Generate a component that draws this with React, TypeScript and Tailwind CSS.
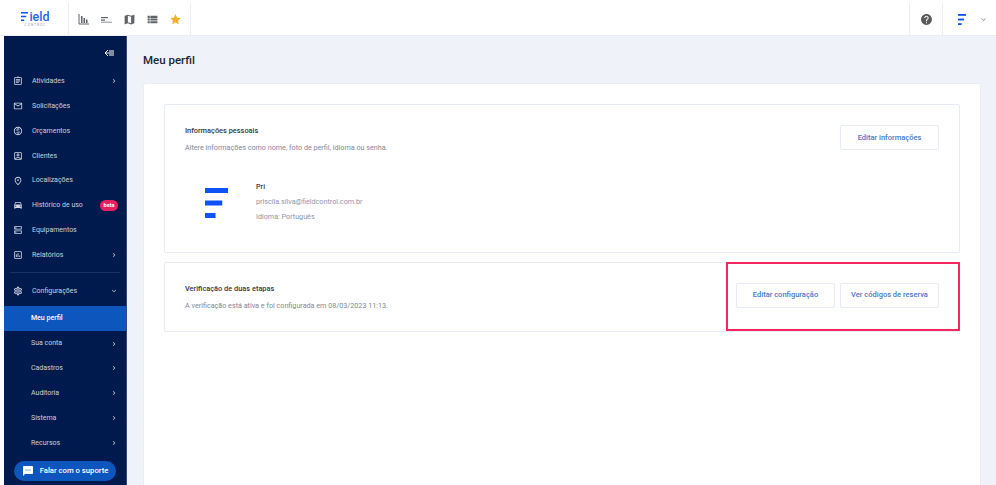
import React from 'react';
import {
  MdOutlineAssignment, MdOutlineMarkunread, MdOutlineMonetizationOn, MdOutlineAccountBox, MdOutlinePlace, MdDirectionsCar, MdOutlineDns, MdOutlineAssessment,
  MdOutlineSettings, MdChevronRight, MdExpandMore, MdSms, MdMap, MdViewList, MdStar, MdHelp,
} from 'react-icons/md';

const mainItems = [
  { label: 'Atividades', icon: MdOutlineAssignment, arrow: true },
  { label: 'Solicitações', icon: MdOutlineMarkunread },
  { label: 'Orçamentos', icon: MdOutlineMonetizationOn },
  { label: 'Clientes', icon: MdOutlineAccountBox },
  { label: 'Localizações', icon: MdOutlinePlace },
  { label: 'Histórico de uso', icon: MdDirectionsCar, beta: true },
  { label: 'Equipamentos', icon: MdOutlineDns },
  { label: 'Relatórios', icon: MdOutlineAssessment, arrow: true },
];

const subItems = ['Sua conta', 'Cadastros', 'Auditoria', 'Sistema', 'Recursos'];

const LogoBars = ({ className }: { className: string }) => (
  <svg viewBox="0 0 24 30" preserveAspectRatio="none" className={className}>
    <rect x="0" y="0" width="24" height="5" fill="#0f52f5" />
    <rect x="0" y="12.5" width="18" height="5" fill="#0f52f5" />
    <rect x="0" y="25" width="11" height="5" fill="#0f52f5" />
  </svg>
);

const SecondaryButton = ({ label }: { label: string }) => (
  <button className="w-[99px] h-[25px] shrink-0 bg-white border border-[#e6ebf5] rounded-[2px] text-[7.5px] font-medium text-[#4a78c8]">
    {label}
  </button>
);

export default function App() {
  return (
    <div className="relative w-[996px] h-[485px] overflow-hidden bg-white font-['Roboto',sans-serif]">
      {/* topbar */}
      <header className="h-[36px] pt-[3px] flex items-stretch bg-white border-b border-[#e9edf4]">
        <div className="w-[68px] shrink-0 flex flex-col items-center justify-center pl-[3px]">
          <div className="flex items-center text-[12.5px] leading-[12px] font-medium text-[#2b62e8]">
            <LogoBars className="w-[7px] h-[9px] mr-[1px]" />
            ield
          </div>
          <div className="text-[3px] leading-[5px] tracking-[1.2px] text-[#8a93a3]">CONTROL</div>
        </div>
        <div className="w-[123px] shrink-0 flex items-center gap-[10px] pl-[9px] border-l border-r border-[#e9edf4] text-[#5f6368]">
          <svg viewBox="0 0 12 12" className="w-[12px] h-[12px]">
            <path d="M1 1v10h10" fill="none" stroke="#5f6368" strokeWidth="1" />
            <rect x="3" y="3" width="1.5" height="7" fill="#5f6368" />
            <rect x="5.5" y="5" width="1.5" height="5" fill="#5f6368" />
            <rect x="8" y="6.5" width="1.5" height="3.5" fill="#5f6368" />
          </svg>
          <svg viewBox="0 0 13 13" className="w-[13px] h-[13px]">
            <rect x="1" y="4" width="7" height="1.2" fill="#5f6368" />
            <rect x="1" y="6.5" width="4" height="1.2" fill="#5f6368" />
            <rect x="1" y="8.7" width="11" height="1" fill="#8f9398" />
          </svg>
          <MdMap size={13} />
          <MdViewList size={13} />
          <MdStar size={13} className="text-[#f9ac2a]" />
        </div>
        <div className="flex-1" />
        <div className="w-[34px] shrink-0 flex items-center justify-center border-l border-r border-[#e9edf4]">
          <MdHelp size={13} className="text-[#5a5a5a]" />
        </div>
        <div className="w-[53px] shrink-0 flex items-center pl-[15px] gap-[13px]">
          <LogoBars className="w-[8px] h-[11px]" />
          <MdExpandMore size={9} className="text-[#8a93a3]" />
        </div>
      </header>

      <div className="flex h-[449px] pl-[4px]">
        {/* sidebar */}
        <aside className="w-[123px] shrink-0 bg-[#001a4d] border-r border-[#3b4a78] flex flex-col text-[#c9d0de] text-[7px]">
          <div className="h-[33px] shrink-0 flex items-center justify-end pr-[11px]">
            <svg viewBox="0 0 11 8" className="w-[11px] h-[8px]">
              <path d="M4 1L1 4l3 3" fill="none" stroke="#fff" strokeWidth="1" />
              <path d="M2 4h8M5 2h5M5 6h5" stroke="#fff" strokeWidth="1" />
            </svg>
          </div>
          {mainItems.map((item) => (
            <div key={item.label} className="h-[24.8px] shrink-0 flex items-center pl-[9px] pr-[8px]">
              <item.icon size={10} className="text-[#d4d9e4] shrink-0" />
              <span className="ml-[9px] flex-1">{item.label}</span>
              {item.arrow && <MdChevronRight size={8} />}
              {item.beta && (
                <span className="w-[18px] h-[11px] rounded-full bg-[#e8205f] text-white text-[5.5px] font-bold flex items-center justify-center">
                  beta
                </span>
              )}
            </div>
          ))}
          <div className="mx-[6px] mt-[5px] border-t border-[#1a3264]" />
          <div className="mt-[5px] h-[24.8px] shrink-0 flex items-center pl-[9px] pr-[8px]">
            <MdOutlineSettings size={10} className="text-[#d4d9e4] shrink-0" />
            <span className="ml-[9px] flex-1">Configurações</span>
            <MdExpandMore size={8} />
          </div>
          <div className="mt-[3px] h-[25px] shrink-0 flex items-center pl-[27px] bg-[#0c56bd] text-white font-medium">
            Meu perfil
          </div>
          {subItems.map((label) => (
            <div key={label} className="h-[24.8px] shrink-0 flex items-center pl-[27px] pr-[8px]">
              <span className="flex-1">{label}</span>
              <MdChevronRight size={8} />
            </div>
          ))}
          <button className="mt-[6px] mx-[10px] h-[20px] rounded-full bg-[#0c56bd] text-white text-[7.7px] font-medium flex items-center justify-center gap-[6px]">
            <MdSms size={12} />
            Falar com o suporte
          </button>
        </aside>

        {/* content */}
        <main className="flex-1 bg-[#eff3f9] pl-[16px] pr-[15px]">
          <h1 className="h-[47px] flex items-center pt-[3px] text-[11.5px] font-medium text-[#22262e]">Meu perfil</h1>
          <div className="h-[402px] bg-white rounded-t-[3px] border border-[#e9edf4] border-b-0 pt-[20px] px-[20px]">
            <section className="h-[149px] border border-[#e6ebf5] rounded-[2px] pt-[20px] pl-[20px] pr-[20px]">
              <div className="flex justify-between items-start">
                <div className="pt-[1px]">
                  <h2 className="text-[7.4px] leading-[10px] font-medium text-[#33373f]">Informações pessoais</h2>
                  <p className="mt-[7px] text-[7.2px] leading-[10px] text-[#80879a]">
                    Altere informações como nome, foto de perfil, idioma ou senha.
                  </p>
                </div>
                <SecondaryButton label="Editar informações" />
              </div>
              <div className="mt-[26px] flex items-center pl-[20px]">
                <LogoBars className="w-[23px] h-[30px]" />
                <div className="ml-[28px] pb-[2px] text-[7.2px] leading-[15px] text-[#8f95a6]">
                  <div className="font-medium text-[#33373f]">Pri</div>
                  <div>priscila.silva@fieldcontrol.com.br</div>
                  <div>Idioma: Português</div>
                </div>
              </div>
            </section>
            <section className="mt-[9px] h-[70px] border border-[#e6ebf5] rounded-[2px] pl-[20px] pr-[20px] flex items-center justify-between">
              <div>
                <h2 className="text-[7.4px] leading-[10px] font-medium text-[#33373f]">Verificação de duas etapas</h2>
                <p className="mt-[7px] text-[7.2px] leading-[10px] text-[#80879a]">
                  A verificação está ativa e foi configurada em 08/03/2023 11:13.
                </p>
              </div>
              <div className="flex gap-[5px] mb-[4px]">
                <SecondaryButton label="Editar configuração" />
                <SecondaryButton label="Ver códigos de reserva" />
              </div>
            </section>
          </div>
        </main>
      </div>

      {/* highlight drawn over the screenshot */}
      <div className="absolute left-[726px] top-[262px] w-[234px] h-[69px] border-[2px] border-[#f5265f]" />
    </div>
  );
}
